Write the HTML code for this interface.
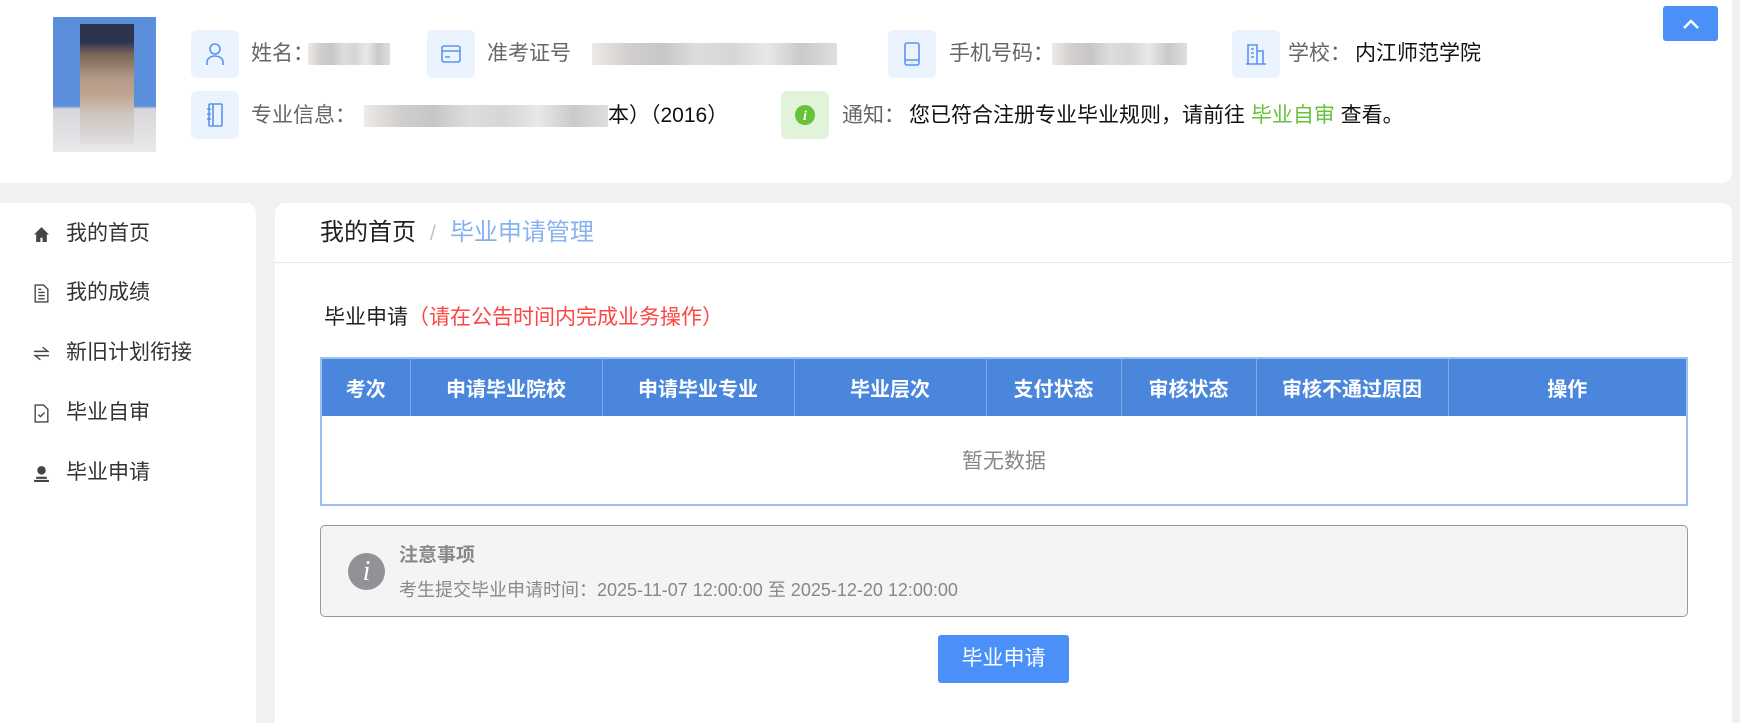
<!DOCTYPE html>
<html><head><meta charset="utf-8"><style>
*{margin:0;padding:0;box-sizing:border-box}
body{width:1740px;height:711px;background:#f0f1f2;font-family:"Liberation Sans","Noto Sans CJK SC",sans-serif;position:relative;overflow:hidden;color:#333}
.abs{position:absolute}
.card{background:#fff;position:absolute}
.ib{position:absolute;width:48px;height:48px;border-radius:6px;background:#eaf3fe;display:flex;align-items:center;justify-content:center}
.lbl{position:absolute;font-size:21px;color:#666;line-height:26px;white-space:nowrap}
.val{color:#111}
.blur{position:absolute;height:22px;background:linear-gradient(90deg,#e8e4e2,#c7c4c2,#b9b8b8,#d6d4d3,#ccc,#e4e2e1,#bdbcbc,#d8d6d6);opacity:.8}
.menu{position:absolute;left:33px;font-size:21px;color:#333;display:flex;align-items:center;line-height:26px}
.menu svg{margin-right:16px}
th{background:#4a86dc;color:#fff;font-size:20px;font-weight:bold;height:58px;border-right:1px solid #7ea8e6}
th:last-child{border-right:none}
</style></head><body>
<div class="card" style="left:0;top:0;width:1732px;height:183px;border-radius:0 0 10px 0"></div>
<div class="abs" style="left:53px;top:17px;width:103px;height:135px;background:linear-gradient(180deg,#5b8fdc 0%,#5b8fdc 66%,#d8d6da 68%,#e9e8ea 100%)"></div>
<div class="abs" style="left:80px;top:24px;width:54px;height:120px;background:linear-gradient(180deg,#2c3550 0,#2c3550 15%,#7a6458 25%,#b49a88 45%,#c0a592 60%,#cdc6c0 75%,#e0dde0 100%)"></div>

<div class="ib" style="left:191px;top:30px"><svg width="22" height="24" viewBox="0 0 22 24" fill="none" stroke="#5a93ee" stroke-width="1.6"><circle cx="11" cy="7" r="5"/><path d="M3 23v-3a8 6 0 0 1 16 0v3"/></svg></div>
<div class="lbl" style="left:251px;top:41px">姓名：</div><div class="blur" style="left:308px;top:43px;width:82px"></div>
<div class="ib" style="left:427px;top:30px"><svg width="22" height="20" viewBox="0 0 22 20" fill="none" stroke="#5a93ee" stroke-width="1.6"><rect x="2" y="2" width="18" height="16" rx="2"/><path d="M2 7h18M5 13h5"/></svg></div>
<div class="lbl" style="left:487px;top:41px">准考证号</div><div class="blur" style="left:592px;top:43px;width:245px"></div>
<div class="ib" style="left:888px;top:30px"><svg width="18" height="26" viewBox="0 0 18 26" fill="none" stroke="#5a93ee" stroke-width="1.6"><rect x="2" y="2" width="14" height="22" rx="2"/><path d="M2 19h14M9 21.5v.5"/></svg></div>
<div class="lbl" style="left:949px;top:41px">手机号码：</div><div class="blur" style="left:1052px;top:43px;width:135px"></div>
<div class="ib" style="left:1232px;top:30px"><svg width="22" height="24" viewBox="0 0 22 24" fill="none" stroke="#5a93ee" stroke-width="1.6"><path d="M3 22V3h9v19M12 9h6v13M1 22h20M6 7h3M6 11h3M6 15h3"/></svg></div>
<div class="lbl" style="left:1288px;top:41px">学校：<span class="val" style="margin-left:4px">内江师范学院</span></div>

<div class="ib" style="left:191px;top:91px"><svg width="18" height="26" viewBox="0 0 18 26" fill="none" stroke="#5a93ee" stroke-width="1.6"><rect x="3" y="2" width="13" height="22" rx="1"/><path d="M7 2v22M1 7h4M1 12h4M1 17h4"/></svg></div>
<div class="lbl" style="left:251px;top:103px">专业信息：</div><div class="blur" style="left:364px;top:105px;width:244px"></div>
<div class="lbl val" style="left:608px;top:103px;color:#111">本）（2016）</div>
<div class="ib" style="left:781px;top:91px;background:#e1f3d8"><svg width="20" height="20"><circle cx="10" cy="10" r="10" fill="#67c23a"/><text x="10" y="15" font-size="14" font-style="italic" font-weight="bold" fill="#fff" text-anchor="middle" font-family="Liberation Serif">i</text></svg></div>
<div class="lbl" style="left:842px;top:103px">通知：<span class="val" style="margin-left:4px">您已符合注册专业毕业规则，请前往 <span style="color:#67c23a">毕业自审</span> 查看。</span></div>

<div class="abs" style="left:1663px;top:6px;width:55px;height:35px;background:#4a90f8;border-radius:3px;display:flex;align-items:center;justify-content:center"><svg width="18" height="12" viewBox="0 0 18 12" fill="none" stroke="#fff" stroke-width="2.4"><path d="M2 10l7-7 7 7"/></svg></div>

<div class="card" style="left:0;top:203px;width:256px;height:520px;border-radius:0 10px 0 0"></div>
<div class="menu" style="top:221px"><svg width="17" height="17" viewBox="0 0 16 16"><path d="M8 1L1 8h2v7h4v-4h2v4h4V8h2z" fill="#444"/></svg>我的首页</div>
<div class="menu" style="top:280px"><svg width="17" height="19" viewBox="0 0 16 18" fill="none" stroke="#444" stroke-width="1.3"><path d="M2 1h8l4 4v12H2z M5 8h6M5 11h6M5 14h6M5 5h3"/></svg>我的成绩</div>
<div class="menu" style="top:340px"><svg width="17" height="17" viewBox="0 0 16 16" fill="none" stroke="#444" stroke-width="1.3"><path d="M1 6h13L9 2M15 10H2l5 4"/></svg>新旧计划衔接</div>
<div class="menu" style="top:400px"><svg width="17" height="19" viewBox="0 0 16 18" fill="none" stroke="#444" stroke-width="1.3"><path d="M2 1h8l4 4v12H2z M5 10l2 2 4-4"/></svg>毕业自审</div>
<div class="menu" style="top:460px"><svg width="17" height="17" viewBox="0 0 16 16" fill="#444"><circle cx="8" cy="5" r="4"/><path d="M3 11h10v2H3zM1 14h14v2H1z"/></svg>毕业申请</div>

<div class="card" style="left:275px;top:203px;width:1457px;height:520px;border-radius:10px 10px 0 0"></div>
<div class="abs" style="left:275px;top:262px;width:1457px;height:1px;background:#e4e6ea"></div>
<div class="abs" style="left:320px;top:217px;font-size:24px;line-height:32px;color:#222;white-space:nowrap">我的首页<span style="color:#c0c4cc;margin:0 14px;font-size:21px">/</span><span style="color:#86b2f0">毕业申请管理</span></div>
<div class="abs" style="left:324px;top:305px;font-size:21px;line-height:26px;color:#222;white-space:nowrap">毕业申请<span style="color:#f44">（请在公告时间内完成业务操作）</span></div>

<table class="abs" style="left:320px;top:357px;width:1368px;border-collapse:collapse;border:2px solid #9ec0ee">
<tr><th style="width:89px">考次</th><th style="width:192px">申请毕业院校</th><th style="width:192px">申请毕业专业</th><th style="width:192px">毕业层次</th><th style="width:135px">支付状态</th><th style="width:135px">审核状态</th><th style="width:192px">审核不通过原因</th><th>操作</th></tr>
<tr><td colspan="8" style="height:89px;text-align:center;font-size:21px;color:#888;background:#fff">暂无数据</td></tr>
</table>

<div class="abs" style="left:320px;top:525px;width:1368px;height:92px;background:#f4f4f4;border:1px solid #999;border-radius:5px"></div>
<div class="abs" style="left:348px;top:553px;width:37px;height:37px;border-radius:50%;background:#919196;color:#fff;font:italic 28px/37px 'Liberation Serif',serif;text-align:center">i</div>
<div class="abs" style="left:399px;top:544px;font-size:19px;font-weight:bold;color:#888;line-height:24px">注意事项</div>
<div class="abs" style="left:399px;top:579px;font-size:18px;color:#888;line-height:22px;white-space:nowrap">考生提交毕业申请时间：2025-11-07 12:00:00 至 2025-12-20 12:00:00</div>

<div class="abs" style="left:938px;top:635px;width:131px;height:48px;background:#4a90f8;border-radius:3px;color:#fff;font-size:21px;line-height:48px;text-align:center">毕业申请</div>
</body></html>
